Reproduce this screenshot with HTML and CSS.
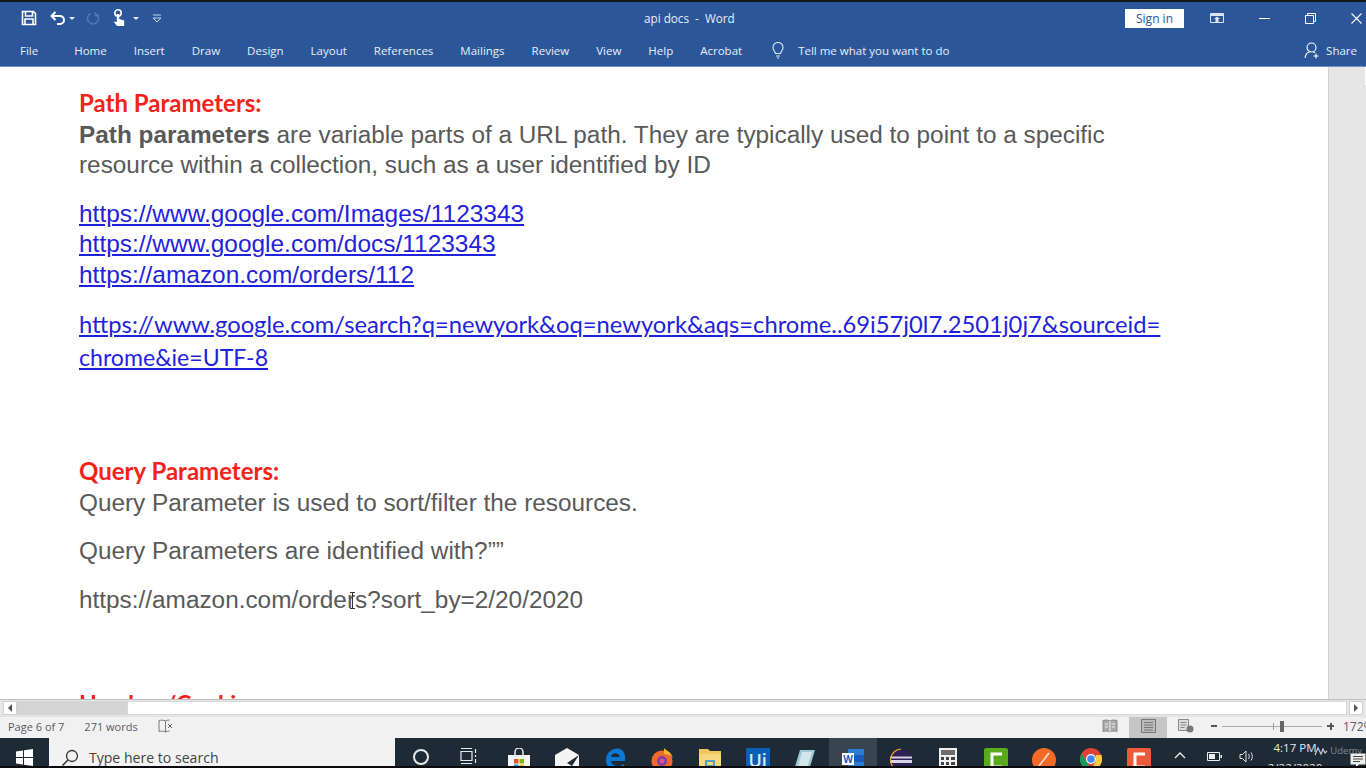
FILE: index.html
```html
<!DOCTYPE html>
<html lang="en">
<head>
    <meta charset="UTF-8">
    <meta name="viewport" content="width=device-width, initial-scale=1.0">
    <title>api docs - Word</title>
    <link rel="stylesheet" href="styles.css">
</head>
<body>
    <div class="window">
        <div class="ribbon">
            <div class="title-row">
                <div class="quick">
                    <svg class="q-save" width="16" height="16" viewBox="0 0 16 16"><path d="M1.5 1.5h11l2 2v11h-13z M4.500 1.500v4.500h7v-4.500 M4 14.500v-5.500h8v5.500" fill="none" stroke="#fff" stroke-width="1.600"/></svg>
                    <svg class="q-undo" width="16" height="14" viewBox="0 0 16 14"><path d="M5.500 1 1.500 5l4 4M2 5h8a4 4 0 0 1 0 8H7" fill="none" stroke="#fff" stroke-width="2"/></svg>
                    <span class="caret"></span>
                    <svg class="q-redo" width="14" height="14" viewBox="0 0 14 14"><path d="M9.500 2.500a5.500 5.500 0 1 1-5 0M9.500 1v3.500H13" fill="none" stroke="#5578b3" stroke-width="1.500"/></svg>
                    <svg class="q-touch" width="14" height="18" viewBox="0 0 14 18"><circle cx="6" cy="4" r="3.200" fill="none" stroke="#fff" stroke-width="1.600"/><path d="M4.800 5h2.400v5l5 1.500V17H5L1.500 12.500 4.800 13z" fill="#fff"/></svg>
                    <span class="caret caret-touch"></span>
                    <svg class="q-more" width="10" height="9" viewBox="0 0 10 9"><path d="M1 1h8M1 4h8L5 8z" fill="none" stroke="#c5d2e6" stroke-width="1"/></svg>
                </div>
                <div class="doc-title">api docs &nbsp;-&nbsp; Word</div>
                <div class="win-controls">
                    <button class="sign-in">Sign in</button>
                    <svg class="w-display" width="14" height="10" viewBox="0 0 14 10"><path d="M.5.5h13v9H.5z" fill="none" stroke="#dbe4f1"/><path d="M1 1h12v2H1zM7 3.500 10 6H8.500v3h-3V6H4z" fill="#dbe4f1"/></svg>
                    <span class="w-min"></span>
                    <svg class="w-restore" width="11" height="11" viewBox="0 0 11 11"><path d="M.5 2.500h8v8h-8zM2.500 2.500v-2h8v8h-2" fill="none" stroke="#fff"/></svg>
                    <svg class="w-close" width="11" height="11" viewBox="0 0 11 11"><path d="M.5.500l10 10M10.500.500l-10 10" stroke="#fff" stroke-width="1.100"/></svg>
                </div>
            </div>
            <div class="tab-row">
                <span class="tab tab-file">File</span>
                <span class="tab">Home</span>
                <span class="tab">Insert</span>
                <span class="tab">Draw</span>
                <span class="tab">Design</span>
                <span class="tab">Layout</span>
                <span class="tab">References</span>
                <span class="tab">Mailings</span>
                <span class="tab">Review</span>
                <span class="tab">View</span>
                <span class="tab">Help</span>
                <span class="tab">Acrobat</span>
                <svg class="bulb" width="12" height="17" viewBox="0 0 12 17"><path d="M3.500 11.500C3.200 9.500 1 8.500 1 5.500a5 5 0 0 1 10 0c0 3-2.200 4-2.500 6zM4 14h4M5 16h2" fill="none" stroke="#e3e9f4" stroke-width="1.100"/></svg>
                <span class="tell">Tell me what you want to do</span>
                <span class="share">
                    <svg width="16" height="17" viewBox="0 0 16 17"><circle cx="7.500" cy="5.500" r="4.500" fill="none" stroke="#fff" stroke-width="1.100"/><path d="M1 16c.5-3.500 2.500-6 5-6.300M12 11.500v5M9.500 14h5M9 9.800l2 1" fill="none" stroke="#fff" stroke-width="1.100"/></svg>
                    Share
                </span>
            </div>
        </div>

        <div class="workspace">
            <div class="page">
                <h2 class="red-head">Path Parameters:</h2>
                <p class="para para-first"><b>Path parameters</b> are variable parts of a URL path. They are typically used to point to a specific<br>resource within a collection, such as a user identified by ID</p>
                <p class="para links">
                    <a href="#">https://www.google.com/Images/1123343</a><br>
                    <a href="#">https://www.google.com/docs/1123343</a><br>
                    <a href="#">https://amazon.com/orders/112</a>
                </p>
                <p class="long-link"><a href="#">https://www.google.com/search?q=newyork&amp;oq=newyork&amp;aqs=chrome..69i57j0l7.2501j0j7&amp;sourceid=<br><span class="long-tail">chrome&amp;ie=UTF-8</span></a></p>
                <h2 class="red-head query-head">Query Parameters:</h2>
                <p class="para para-first">Query Parameter is used to sort/filter the resources.</p>
                <p class="para para-gap">Query Parameters are identified with?””</p>
                <p class="para para-gap para-url">https://amazon.com/orders?sort_by=2/20/2020<svg class="ibeam" width="7" height="17" viewBox="0 0 7 17"><path d="M1 .5h5M3.500.5v16M1 16.500h5" fill="none" stroke="#333"/></svg></p>
                <h2 class="red-head headers-head">Headers/Cookies</h2>
            </div>
            <div class="v-scroll"><span class="v-thumb"></span></div>
        </div>

        <div class="h-scroll">
            <span class="arrow-box"><span class="arrow-left"></span></span>
            <span class="h-gray"></span>
            <span class="h-white"></span>
            <span class="arrow-box arrow-box-right"><span class="arrow-right"></span></span>
        </div>

        <div class="status">
            <span class="st-page">Page 6 of 7</span>
            <span class="st-words">271 words</span>
            <svg class="st-book" width="15" height="14" viewBox="0 0 15 14"><path d="M7.500 2v11M7.500 2C6 1 3 1 1 1.500v11c2-.5 5-.5 6.500.5 1-.7 2.500-1 4-1M7.500 2c1-.7 2.500-1 4-1" fill="none" stroke="#777"/><path d="M10 5l4 4M14 5l-4 4" stroke="#666"/></svg>
            <div class="st-right">
                <span class="view-btn">
                    <svg width="16" height="14" viewBox="0 0 16 14"><path d="M1 1.500c3-.8 5.500-.5 7 .5 1.500-1 4-1.300 7-.5v11c-3-.8-5.500-.5-7 .5-1.500-1-4-1.300-7-.5z" fill="#a9a9a9" stroke="#888"/><path d="M8 2v11M3 5h3M3 8h3M10 5h3M10 8h3" stroke="#eee"/></svg>
                </span>
                <span class="view-btn view-active">
                    <svg width="15" height="14" viewBox="0 0 15 14"><path d="M.5.500h14v13H.5z" fill="#bbb" stroke="#777"/><path d="M3 3.500h9M3 6h9M3 8.500h9M3 11h9" stroke="#777"/></svg>
                </span>
                <span class="view-btn">
                    <svg width="16" height="14" viewBox="0 0 16 14"><path d="M.5.500h10v11H.5z" fill="#ddd" stroke="#888"/><path d="M2.500 3.500h6M2.500 6h6M2.500 8.500h4" stroke="#888"/><circle cx="12" cy="10" r="3.500" fill="#777"/></svg>
                </span>
                <span class="zoom-minus"></span>
                <span class="zoom-track"><span class="zoom-tick"></span><span class="zoom-thumb"></span></span>
                <span class="zoom-plus"></span>
                <span class="zoom-pct">172%</span>
            </div>
        </div>

        <div class="taskbar">
            <span class="start">
                <svg width="17" height="17" viewBox="0 0 17 17"><path d="M0 2.500 7 1.500v6.500H0zM8 1.300 17 0v8H8zM0 9h7v6.500L0 14.500zM8 9h9v8l-9-1.300z" fill="#fff"/></svg>
            </span>
            <div class="search">
                <svg width="18" height="18" viewBox="0 0 18 18"><circle cx="11" cy="7" r="5.500" fill="none" stroke="#333" stroke-width="1.300"/><path d="M7 11 1.500 16.500" stroke="#333" stroke-width="1.500"/></svg>
                <span>Type here to search</span>
            </div>
            <div class="apps">
                <span class="app"><svg width="18" height="18" viewBox="0 0 18 18"><circle cx="9" cy="9" r="7" fill="none" stroke="#e8e8e8" stroke-width="2"/></svg></span>
                <span class="app"><svg width="18" height="16" viewBox="0 0 18 16"><path d="M1 3.500h11v9H1zM1 .500h11M1 15.500h11M15.500 1v4M15.500 7v2M15.500 11v4" fill="none" stroke="#e8e8e8" stroke-width="1.200"/></svg></span>
                <span class="app app-store"><svg width="24" height="26" viewBox="0 0 24 26"><path d="M8 7V4a4 4 0 0 1 8 0v3" fill="none" stroke="#eee" stroke-width="1.500"/><path d="M1 7h22v19H1z" fill="#f5f5f5"/><path d="M7 11h4.500v4.500H7z" fill="#f25022"/><path d="M12.500 11H17v4.500h-4.500z" fill="#7fba00"/><path d="M7 16.500h4.500V21H7z" fill="#00a4ef"/><path d="M12.500 16.500H17V21h-4.500z" fill="#ffb900"/></svg></span>
                <span class="app"><svg width="26" height="22" viewBox="0 0 26 22"><path d="M1 7 13 0l12 7v15H1z" fill="#f4f4f4"/><path d="M1 7l12 8 12-8-7 11-5-3z" fill="#1f2d38"/></svg></span>
                <span class="app"><svg width="22" height="22" viewBox="0 0 22 22"><path d="M21 13H7c.5 5 8 6.500 13 3v4.500c-7 3.500-18 1.500-18-8.500C2 4 9 0 14 .5c5 .5 8 5 7 12.500zM7 9h8.500C15.500 4 7.500 4 7 9z" fill="#0a78d4"/></svg></span>
                <span class="app"><svg width="24" height="24" viewBox="0 0 24 24"><circle cx="12" cy="13" r="10.500" fill="#f2692b"/><path d="M14 0c2 3 7 3 9 10-2-3-5-4-9-4z" fill="#f7b733"/><circle cx="12" cy="13" r="5" fill="#7a3fa8"/><circle cx="12" cy="13" r="2.500" fill="#d9538d"/></svg></span>
                <span class="app"><svg width="22" height="22" viewBox="0 0 22 22"><path d="M0 1h9l2 2h11v19H0z" fill="#f0c75e"/><path d="M0 6h22v16H0z" fill="#f7d77e"/><path d="M6 12h10v7H6z" fill="#4fa3c7"/><path d="M8 14h6v3H8z" fill="#f7d77e"/></svg></span>
                <span class="app"><span class="ui-logo">Ui</span></span>
                <span class="app"><svg width="24" height="24" viewBox="0 0 24 24"><path d="M7 2h15l-6 20H1z" fill="#9fc9d6"/><path d="M9 4h10l-5 16H5z" fill="#d5e6ea"/></svg></span>
                <span class="app app-active"><svg width="24" height="22" viewBox="0 0 24 22"><path d="M7 1h16v20H7z" fill="#2b7cd3"/><path d="M7 7h16v7H7z" fill="#185abd"/><path d="M1 5h12v12H1z" fill="#fff"/><text x="7" y="14.500" class="word-w">W</text></svg></span>
                <span class="app"><svg width="24" height="24" viewBox="0 0 24 24"><circle cx="12" cy="12" r="11" fill="#2c2255"/><path d="M1 8.500h22v2H1zM1 12h22v3H1z" fill="#d8d4e8"/><path d="M12 1A11 11 0 0 0 8 22" fill="none" stroke="#f5a623" stroke-width="1.200"/></svg></span>
                <span class="app"><svg width="18" height="24" viewBox="0 0 18 24"><path d="M0 0h18v24H0z" fill="#f0f0f0"/><path d="M2 2h14v5H2z" fill="#6c6c6c"/><path d="M2 9h3v3H2zM7 9h3v3H7zM12 9h4v3h-4zM2 14h3v3H2zM7 14h3v3H7zM12 14h4v3h-4zM2 19h3v3H2zM7 19h3v3H7zM12 19h4v3h-4z" fill="#444"/></svg></span>
                <span class="app"><svg width="24" height="24" viewBox="0 0 24 24"><rect width="24" height="24" rx="2" fill="#5aaa1d"/><path d="M18 6H8v13h10" fill="none" stroke="#fff" stroke-width="3"/></svg></span>
                <span class="app"><svg width="24" height="24" viewBox="0 0 24 24"><circle cx="12" cy="12" r="12" fill="#f26a26"/><path d="M7 18 17 5" stroke="#fdd" stroke-width="1.600"/></svg></span>
                <span class="app"><svg width="22" height="22" viewBox="0 0 22 22"><circle cx="11" cy="11" r="11" fill="#db4437"/><path d="M11 22a11 11 0 0 1-9.500-16.500L7 14z" fill="#0f9d58"/><path d="M22 11a11 11 0 0 1-11 11l5-9V7h5.500z" fill="#ffcd40"/><circle cx="11" cy="11" r="5" fill="#fff"/><circle cx="11" cy="11" r="3.800" fill="#4285f4"/></svg></span>
                <span class="app"><svg width="24" height="24" viewBox="0 0 24 24"><rect width="24" height="24" rx="2" fill="#ee5b3a"/><path d="M18 6H8v13h10" fill="none" stroke="#fff" stroke-width="3"/></svg></span>
            </div>
            <div class="tray">
                <svg class="tr-up" width="12" height="7" viewBox="0 0 12 7"><path d="M1 6l5-5 5 5" fill="none" stroke="#eee" stroke-width="1.300"/></svg>
                <svg class="tr-batt" width="15" height="9" viewBox="0 0 15 9"><path d="M.5.500h12v8H.5z" fill="none" stroke="#eee"/><path d="M2 2h6v5H2zM13.500 3H15v3h-1.500z" fill="#eee"/></svg>
                <svg class="tr-vol" width="16" height="13" viewBox="0 0 16 13"><path d="M1 4.500h2.500L7 1v11L3.500 8.500H1zM9.500 4c1 1.500 1 3.500 0 5M12 2.500c1.800 2.500 1.800 5.500 0 8" fill="none" stroke="#e4e4e4"/></svg>
                <div class="clock">
                    <span>4:17 PM</span>
                    <span>2/22/2020</span>
                </div>
                <svg class="tr-note" width="16" height="15" viewBox="0 0 16 15"><path d="M.5.500h15v11H9l-3 3v-3H.5z" fill="#eee"/><path d="M3 3.500h10M3 6h10M3 8.500h7" stroke="#444"/></svg>
            </div>
            <div class="watermark">
                <svg width="14" height="10" viewBox="0 0 14 10"><path d="M1 9 4 2l3 6 2-5 2 4 2-2" fill="none" stroke="#c8c8c8" stroke-width="1.200"/></svg>
                <span>Udemy</span>
            </div>
        </div>
    </div>
</body>
</html>
```

FILE: styles.css
```css
html, body {
    margin: 0;
    height: 100%;
    overflow: hidden;
}
.window {
    display: flex;
    flex-direction: column;
    height: 768px;
    overflow: hidden;
    background-color: #fff;
    font-family: "Open Sans", sans-serif;
}

/* ribbon */
.ribbon {
    height: 65px;
    flex: none;
    border-top: 2px solid #17181c;
    background-color: #2b579a;
    color: #e9eef6;
    box-shadow: inset 0 -1px 0 #6f90c1;
}
.title-row {
    display: flex;
    align-items: center;
    height: 32px;
    position: relative;
}
.quick {
    display: flex;
    align-items: center;
    padding-left: 21px;
}
.q-undo {
    margin-left: 13px;
}
.caret {
    width: 0;
    height: 0;
    margin-left: 3px;
    border-left: 3px solid transparent;
    border-right: 3px solid transparent;
    border-top: 3px solid #e9eef6;
}
.q-redo {
    margin-left: 11px;
}
.q-touch {
    margin-left: 12px;
}
.caret-touch {
    margin-left: 7px;
}
.q-more {
    margin-left: 13px;
}
.doc-title {
    position: absolute;
    left: 644px;
    top: 8px;
    font-size: 11.700px;
    line-height: 17px;
}
.win-controls {
    display: flex;
    align-items: center;
    margin-left: auto;
    padding-right: 4px;
}
.sign-in {
    width: 59px;
    height: 19px;
    padding: 0;
    border: none;
    background-color: #fff;
    color: #2b579a;
    font-family: "Open Sans", sans-serif;
    font-size: 12px;
    line-height: 19px;
}
.w-display {
    margin-left: 26px;
}
.w-min {
    width: 11px;
    height: 1px;
    margin-left: 35px;
    background-color: #fff;
}
.w-restore {
    margin-left: 35px;
}
.w-close {
    margin-left: 35px;
}
.tab-row {
    display: flex;
    align-items: center;
    height: 29px;
    padding: 2px 0 0 20px;
    font-size: 11.500px;
}
.tab {
    margin-right: 27px;
}
.tab-file {
    margin-right: 36px;
}
.bulb {
    margin-left: 3px;
    margin-right: 14px;
}
.share {
    display: flex;
    align-items: center;
    gap: 6px;
    margin-left: auto;
    padding-right: 9px;
}

/* document */
.workspace {
    display: flex;
    flex: 1;
    min-height: 0;
    overflow: hidden;
}
.page {
    flex: 1;
    padding: 21px 0 0 79px;
    color: #595959;
    font-family: "Liberation Sans", Arial, sans-serif;
    font-size: 24.350px;
    line-height: 30.400px;
}
.red-head {
    margin: 0;
    color: #f5221a;
    font-family: Lato, sans-serif;
    font-size: 24px;
    font-weight: 700;
    line-height: 30px;
}
.para {
    margin: 0;
    white-space: nowrap;
}
.para-first {
    margin-top: 2px;
}
.links {
    margin-top: 18px;
    font-size: 24.450px;
}
.para a, .long-link a {
    color: #1f22dc;
    text-decoration: underline;
}
.long-link {
    margin: 18px 0 0;
    font-family: Lato, sans-serif;
    font-size: 23.750px;
    line-height: 33px;
    white-space: nowrap;
}
.long-tail {
    font-size: 23.100px;
}
.query-head {
    margin-top: 82px;
}
.para-gap {
    margin-top: 18px;
}
.para-url {
    position: relative;
}
.ibeam {
    position: absolute;
    left: 270px;
    top: 7px;
}
.headers-head {
    margin-top: 73px;
    font-size: 23.300px;
}
.v-scroll {
    position: relative;
    flex: none;
    width: 37px;
    background-color: #e6e6e6;
    border-left: 1px solid #d0d0d0;
}
.v-thumb {
    position: absolute;
    right: 0;
    top: 0;
    width: 1px;
    height: 18px;
    background-color: #fff;
}
.h-scroll {
    display: flex;
    align-items: stretch;
    flex: none;
    height: 14px;
    padding: 1px 3px;
    border-top: 1px solid #bdbdbd;
    background-color: #e6e6e6;
}
.arrow-box {
    display: flex;
    align-items: center;
    justify-content: center;
    width: 14px;
    background-color: #fff;
    border: 1px solid #d0d0d0;
    box-sizing: border-box;
}
.arrow-left {
    border-top: 4px solid transparent;
    border-bottom: 4px solid transparent;
    border-right: 4px solid #555;
}
.arrow-right {
    border-top: 4px solid transparent;
    border-bottom: 4px solid transparent;
    border-left: 4px solid #555;
}
.h-gray {
    width: 110px;
    background-color: #d4d4d4;
}
.h-white {
    flex: 1;
    background-color: #fff;
    border: 1px solid #d8d8d8;
}
.arrow-box-right {
    margin-left: 2px;
}

/* status bar */
.status {
    display: flex;
    align-items: center;
    flex: none;
    height: 18px;
    padding: 0 0 3px 8px;
    background-color: #f1f1f1;
    color: #5a5a5a;
    font-size: 11px;
    border-top: 1px solid #e2e2e2;
}
.st-words {
    margin-left: 20px;
}
.st-book {
    margin-left: 20px;
}
.st-right {
    display: flex;
    align-items: center;
    height: 100%;
    margin-left: auto;
}
.view-btn {
    display: flex;
    align-items: center;
    justify-content: center;
    align-self: flex-start;
    width: 38px;
    height: 21px;
    padding-bottom: 3px;
    box-sizing: border-box;
}
.view-active {
    background-color: #c6c6c6;
}
.zoom-minus {
    width: 6px;
    height: 2px;
    margin-left: 6px;
    background-color: #555;
}
.zoom-track {
    position: relative;
    width: 100px;
    height: 1px;
    margin: 0 5px;
    background-color: #aaa;
}
.zoom-tick {
    position: absolute;
    left: 51px;
    top: -3px;
    width: 1px;
    height: 7px;
    background-color: #999;
}
.zoom-thumb {
    position: absolute;
    left: 58px;
    top: -5px;
    width: 4px;
    height: 11px;
    background-color: #666;
}
.zoom-plus {
    position: relative;
    width: 7px;
    height: 2px;
    background-color: #555;
}
.zoom-plus::after {
    content: "";
    position: absolute;
    left: 2.500px;
    top: -2.500px;
    width: 2px;
    height: 7px;
    background-color: #555;
}
.zoom-pct {
    width: 23px;
    margin-left: 9px;
    overflow: hidden;
    white-space: nowrap;
    font-size: 12px;
}

.taskbar {
    position: relative;
    display: flex;
    align-items: flex-start;
    flex: none;
    height: 30px;
    overflow: hidden;
    background-color: #1e2b36;
    border-bottom: 2px solid #0b0b0d;
    box-sizing: border-box;
}
.start {
    display: flex;
    justify-content: center;
    width: 49px;
    padding-top: 11px;
}
.search {
    display: flex;
    align-items: flex-start;
    gap: 10px;
    width: 347px;
    height: 30px;
    padding: 11px 0 0 12px;
    box-sizing: border-box;
    background-color: #f2f2f2;
    color: #444;
    font-size: 14.100px;
    line-height: 18px;
}
.apps {
    display: flex;
    padding-left: 2px;
}
.app {
    display: flex;
    justify-content: center;
    width: 47.700px;
    height: 30px;
    padding-top: 10px;
    box-sizing: border-box;
}
.app-store {
    margin-left: 3px;
}
.app-active {
    background-color: #38444f;
}
.ui-logo {
    width: 24px;
    height: 24px;
    background-color: #0a5fb4;
    color: #d6ecff;
    font-size: 18px;
    font-weight: 600;
    line-height: 24px;
    text-align: center;
}
.word-w {
    fill: #185abd;
    font-family: "Open Sans", sans-serif;
    font-size: 10px;
    font-weight: 700;
    text-anchor: middle;
}
.tray {
    display: flex;
    align-items: flex-start;
    margin-left: 11px;
    padding-top: 14px;
}
.tr-batt {
    margin-left: 21px;
}
.tr-vol {
    margin-left: 17px;
    margin-top: -2px;
}
.clock {
    display: flex;
    flex-direction: column;
    align-items: center;
    width: 80px;
    margin-top: -14px;
    color: #e6e6e6;
    font-size: 11.500px;
    line-height: 20px;
}
.tr-note {
    margin-left: 15px;
    margin-top: 1px;
}
.watermark {
    position: absolute;
    right: 4px;
    top: 6px;
    display: flex;
    align-items: center;
    gap: 2px;
    color: rgba(255, 255, 255, 0.45);
    font-size: 9.500px;
}
```
